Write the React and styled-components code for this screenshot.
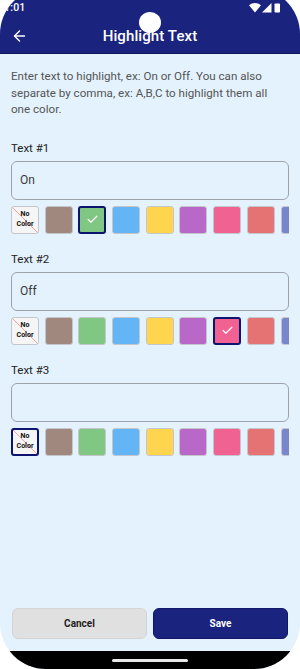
import React, { useState } from "react";
import styled, { createGlobalStyle } from "styled-components";
import { ArrowLeft, Check } from "lucide-react";

const GlobalStyle = createGlobalStyle`
  html, body { margin: 0; padding: 0; background: #ffffff; }
  body { font-family: Roboto, "Noto Sans", "Liberation Sans", sans-serif; overflow: hidden; }
  * { box-sizing: border-box; }
`;

const Screen = styled.div`
  position: relative;
  width: 300px;
  height: 681px;
  margin-top: -12px;
  border-radius: 46px;
  overflow: hidden;
  background: #e3f2fd;
  display: flex;
  flex-direction: column;
`;

const AppBar = styled.header`
  background: #1a237e;
  border-bottom: 1px solid #10165c;
  display: flex;
  flex-direction: column;
`;

const StatusBar = styled.div`
  height: 30px;
  display: flex;
  align-items: flex-end;
  justify-content: space-between;
  padding: 0 19px 5px 4px;
  color: #fff;
`;

const Clock = styled.span`
  font-size: 10.5px;
  font-weight: 500;
  line-height: 10px;
  letter-spacing: 0.2px;
`;

const StatusIcons = styled.div`
  display: flex;
  align-items: center;
  gap: 1px;
`;

const Toolbar = styled.div`
  position: relative;
  height: 35px;
  display: flex;
  align-items: center;
  justify-content: center;
`;

const BackButton = styled.button`
  position: absolute;
  left: 11px;
  top: 50%;
  transform: translateY(-50%);
  background: none;
  border: none;
  padding: 0;
  display: flex;
  color: #fff;
`;

const Title = styled.h1`
  margin: 0;
  color: #fff;
  font-size: 15px;
  font-weight: 500;
  letter-spacing: 0.1px;
`;

const Camera = styled.div`
  position: absolute;
  top: 24px;
  left: 139px;
  width: 22px;
  height: 21px;
  border-radius: 50%;
  background: #fff;
`;

const Content = styled.main`
  flex: 1;
  padding: 14px 11px 0 11px;
  display: flex;
  flex-direction: column;
`;

const Description = styled.p`
  margin: 0 0 23px;
  font-size: 11.6px;
  line-height: 16.5px;
  color: #555;
`;

const Section = styled.section`
  display: flex;
  flex-direction: column;
  margin-bottom: 18px;
`;

const Label = styled.label`
  font-size: 11.5px;
  line-height: 14px;
  color: #222;
  margin-bottom: 6px;
`;

const TextInput = styled.input`
  height: 39px;
  width: 100%;
  border: 1px solid #9ea3ab;
  border-radius: 6px;
  background: transparent;
  padding: 0 8px;
  font-family: inherit;
  font-size: 12px;
  color: #3a3a3a;
  outline: none;
`;

const SwatchRow = styled.div`
  margin-top: 6px;
  display: flex;
  gap: 5.7px;
  overflow: hidden;
`;

const Swatch = styled.button`
  flex: 0 0 28px;
  height: 28px;
  border-radius: 3px;
  padding: 0;
  border: ${(p) => (p.$selected ? "2px solid #0d1470" : "1px solid #c3c7cc")};
  background: ${(p) => p.$color};
  display: flex;
  align-items: center;
  justify-content: center;
  color: #fff;
  cursor: pointer;
`;

const NoColor = styled(Swatch)`
  background: linear-gradient(
      to top right,
      transparent calc(50% - 0.6px),
      #f2a3a3 50%,
      transparent calc(50% + 0.6px)
    ),
    #f5f5f5;
  color: #111;
  flex-direction: column;
  text-align: center;
`;

const NoColorText = styled.span`
  display: block;
  font-family: Roboto, sans-serif;
  font-size: 7px;
  font-weight: 700;
  line-height: 9.5px;
  white-space: nowrap;
`;

const Footer = styled.footer`
  display: flex;
  gap: 6px;
  padding: 0 12px 12px;
`;

const ActionButton = styled.button`
  flex: 1;
  height: 31px;
  border-radius: 6px;
  font-family: inherit;
  font-size: 10px;
  font-weight: 700;
  border: 1px solid ${(p) => (p.$primary ? "#11186a" : "#d4d4d4")};
  background: ${(p) => (p.$primary ? "#1a237e" : "#e0e0e0")};
  color: ${(p) => (p.$primary ? "#fff" : "#222")};
`;

const NavBar = styled.div`
  height: 18px;
  background: #000;
  display: flex;
  align-items: center;
  justify-content: center;
`;

const HomePill = styled.div`
  width: 76px;
  height: 3px;
  border-radius: 2px;
  background: #e8e8e8;
`;

const COLORS = [
  "#a1887f",
  "#81c784",
  "#64b5f6",
  "#ffd54f",
  "#ba68c8",
  "#f06292",
  "#e57373",
  "#7986cb",
  "#4db6ac",
];

function Swatches({ selected, onSelect }) {
  return (
    <SwatchRow>
      <NoColor $selected={selected === -1} onClick={() => onSelect(-1)}>
        <NoColorText>No</NoColorText>
        <NoColorText>Color</NoColorText>
      </NoColor>
      {COLORS.map((c, i) => (
        <Swatch key={c} $color={c} $selected={selected === i} onClick={() => onSelect(i)}>
          {selected === i && <Check size={13} strokeWidth={2.2} />}
        </Swatch>
      ))}
    </SwatchRow>
  );
}

export default function App() {
  const [items, setItems] = useState([
    { text: "On", color: 1 },
    { text: "Off", color: 5 },
    { text: "", color: -1 },
  ]);

  const update = (idx, patch) =>
    setItems((prev) => prev.map((it, i) => (i === idx ? { ...it, ...patch } : it)));

  return (
    <>
      <GlobalStyle />
      <Screen>
        <AppBar>
          <StatusBar>
            <Clock>1:01</Clock>
            <StatusIcons>
              <svg width="12" height="10" viewBox="0 0 12 10">
                <path d="M6 9.5 L0 2.2 A9.5 9.5 0 0 1 12 2.2 Z" fill="#fff" />
              </svg>
              <svg width="10" height="10" viewBox="0 0 10 10">
                <path d="M0 9.5 L9.5 0 L9.5 9.5 Z" fill="#fff" />
              </svg>
              <svg width="8" height="10" viewBox="0 0 8 10">
                <rect x="1.5" y="0.5" width="5.5" height="9" rx="0.8" fill="#fff" />
              </svg>
            </StatusIcons>
          </StatusBar>
          <Toolbar>
            <BackButton aria-label="Back">
              <ArrowLeft size={17} strokeWidth={2} />
            </BackButton>
            <Title>Highlight Text</Title>
          </Toolbar>
        </AppBar>
        <Camera />
        <Content>
          <Description>
            Enter text to highlight, ex: On or Off. You can also separate by comma, ex: A,B,C to
            highlight them all one color.
          </Description>
          {items.map((it, i) => (
            <Section key={i}>
              <Label>Text #{i + 1}</Label>
              <TextInput value={it.text} onChange={(e) => update(i, { text: e.target.value })} />
              <Swatches selected={it.color} onSelect={(c) => update(i, { color: c })} />
            </Section>
          ))}
        </Content>
        <Footer>
          <ActionButton>Cancel</ActionButton>
          <ActionButton $primary>Save</ActionButton>
        </Footer>
        <NavBar>
          <HomePill />
        </NavBar>
      </Screen>
    </>
  );
}
